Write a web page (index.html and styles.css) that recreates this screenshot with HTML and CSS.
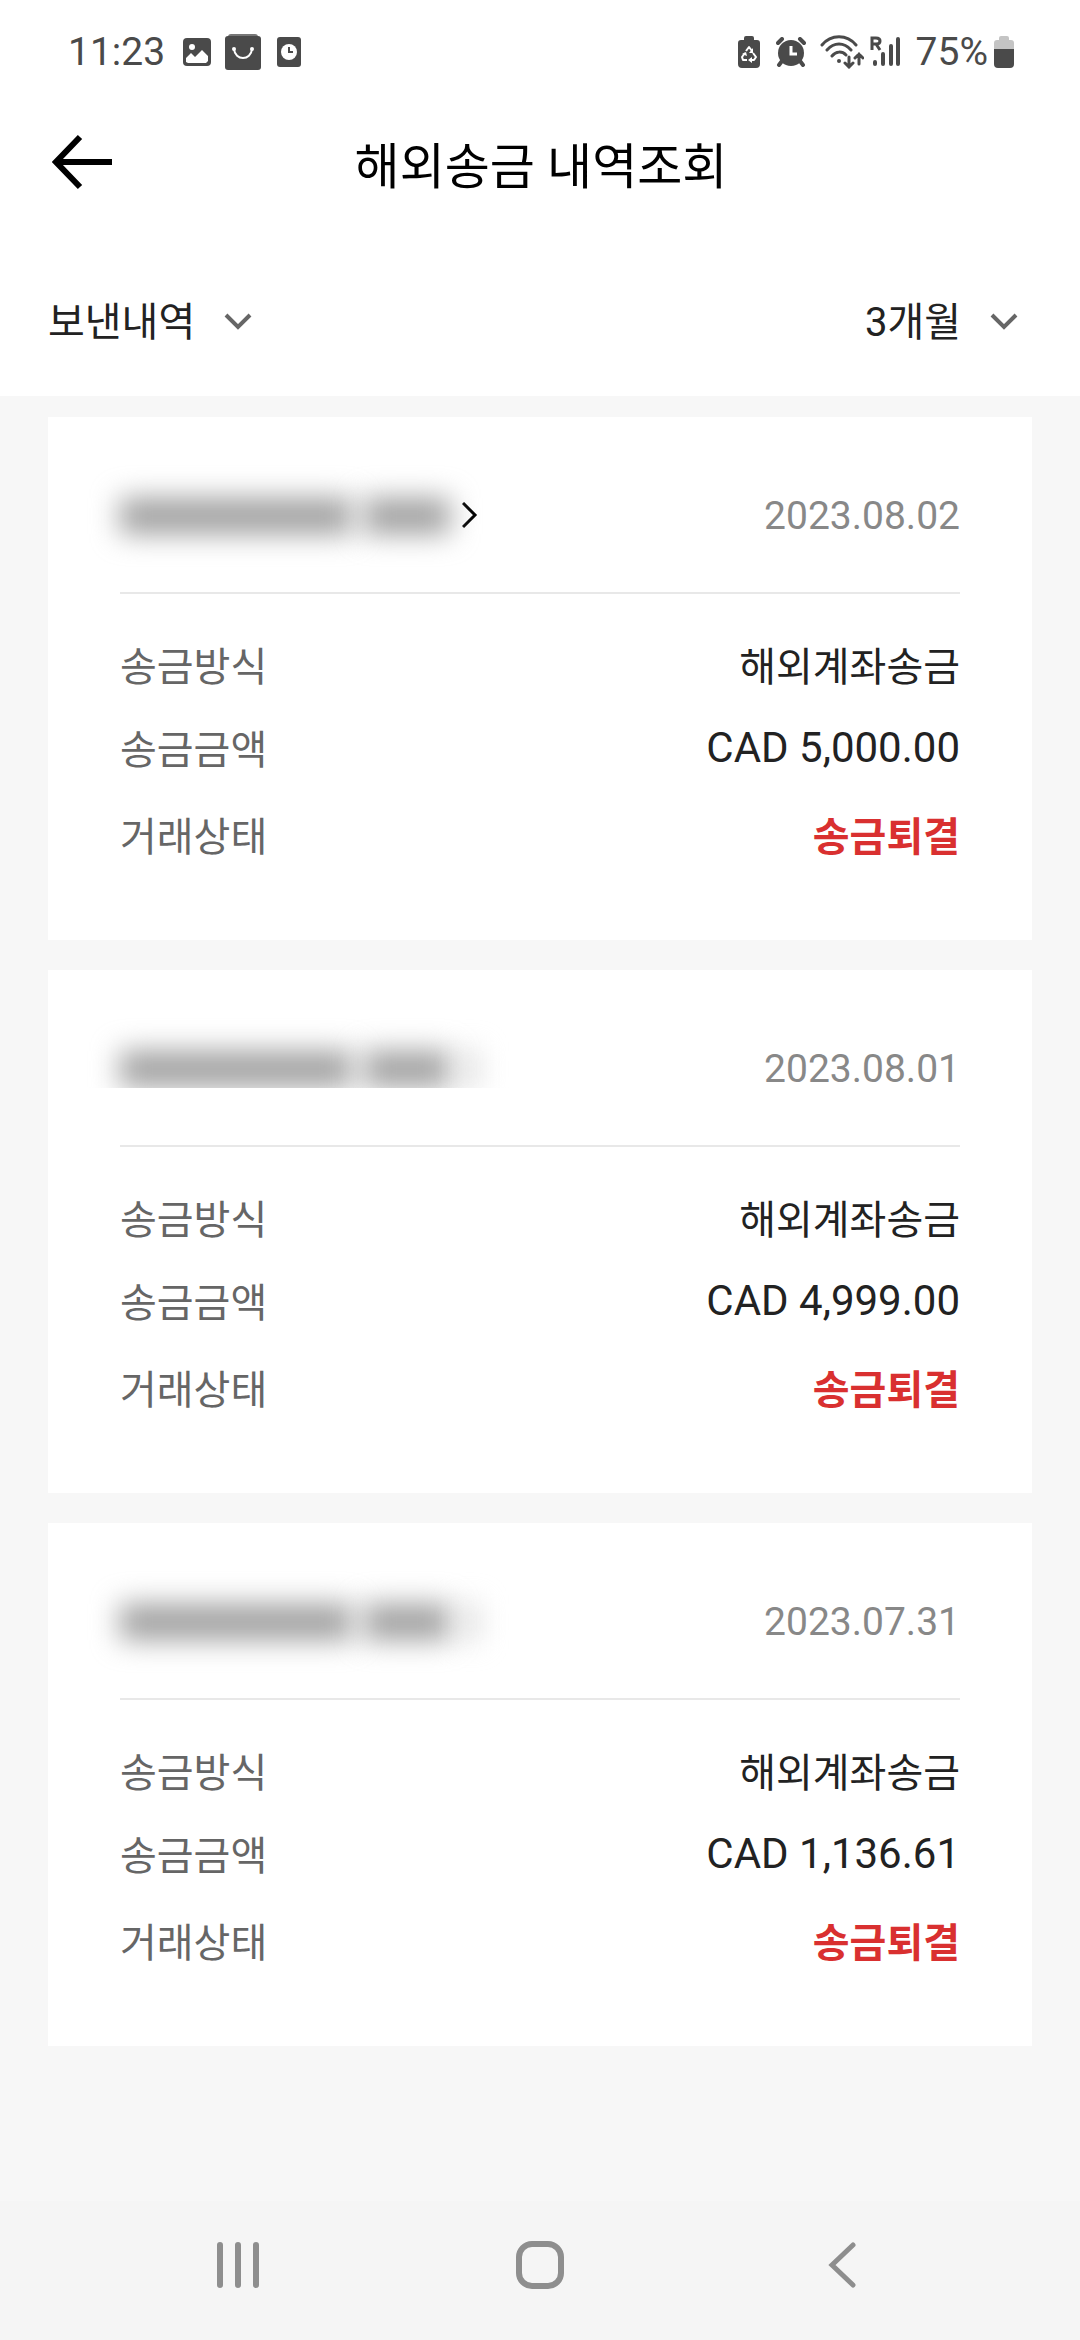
FILE: index.html
```html
<!DOCTYPE html>
<html lang="ko">
<head>
    <meta charset="UTF-8">
    <meta name="viewport" content="width=device-width, initial-scale=1.0">
    <title>해외송금 내역조회</title>
    <link rel="stylesheet" href="styles.css">
</head>
<body>
    <div class="status-bar">
        <div class="status-left">
            <span>11:23</span>
            <svg class="icon-image" width="28" height="28" viewBox="0 0 28 28">
                <rect width="28" height="28" rx="4" fill="#4a4a4a"/>
                <circle cx="9" cy="9" r="3" fill="#fff"/>
                <path d="M3 24v-4l5-5 4 4 7-7 6 6v5l-2 2H5z" fill="#fff"/>
            </svg>
            <svg width="36" height="36" viewBox="0 0 36 36">
                <path d="M3 3q0-3 3-3h24q3 0 3 3z" fill="#777"/>
                <rect y="2" width="36" height="34" rx="3" fill="#4a4a4a"/>
                <path d="M9 15c1 12 17 12 18 0" fill="none" stroke="#fff" stroke-width="2"/>
                <circle cx="9" cy="15" r="2" fill="#fff"/>
                <circle cx="27" cy="15" r="2" fill="#fff"/>
            </svg>
            <svg class="icon-clock" width="24" height="30" viewBox="0 0 24 30">
                <rect width="24" height="30" rx="3" fill="#4a4a4a"/>
                <circle cx="12" cy="15" r="8" fill="#fff"/>
                <path d="M12 10v5h4" fill="none" stroke="#4a4a4a" stroke-width="2"/>
            </svg>
        </div>
        <div class="status-right">
            <svg width="22" height="32" viewBox="0 0 22 32">
                <path d="M6 4V2q0-2 2-2h6q2 0 2 2v2h3q3 0 3 3v21q0 4-4 4H4q-4 0-4-4V7q0-3 3-3z" fill="#4a4a4a"/>
                <path d="M8 15l3-4 3 4M15 17l3 4-2 3h-3M9 24H5l-1-3 3-4" fill="none" stroke="#fff" stroke-width="2" stroke-linejoin="round"/>
                <path d="M15 12v5h-4zM14 21v6l-4-3zM4 18l4-2 1 4z" fill="#fff"/>
            </svg>
            <svg class="icon-alarm" width="30" height="30" viewBox="0 0 30 30">
                <circle cx="15" cy="16" r="13" fill="#4a4a4a"/>
                <path d="M2 6l4-4M28 6l-4-4M6 24l-3 4M24 24l3 4" stroke="#4a4a4a" stroke-width="4" stroke-linecap="round"/>
                <path d="M15 9v8h6" fill="none" stroke="#fff" stroke-width="3"/>
            </svg>
            <svg class="icon-wifi" width="44" height="34" viewBox="0 0 44 34">
                <g fill="none" stroke="#4a4a4a" stroke-width="3" stroke-linecap="round">
                    <path d="M2 10c9-11 25-11 34 0M7 15c7-8 17-8 24 0M12 21c4-5 10-5 14-1"/>
                    <path d="M29 22v10M25 28l4 4 4-4M39 29V19M35 23l4-4 4 4"/>
                </g>
                <circle cx="19" cy="26" r="2" fill="#4a4a4a"/>
            </svg>
            <svg class="icon-signal" width="30" height="32" viewBox="0 0 30 32">
                <path d="M2 14V2h4q4 0 4 3t-4 3H2M6 8l4 6" fill="none" stroke="#4a4a4a" stroke-width="3"/>
                <path d="M5 26v2M13 18v10M21 10v18M28 3v25" stroke="#4a4a4a" stroke-width="4" stroke-linecap="round"/>
            </svg>
            <span>75%</span>
            <svg class="icon-battery" width="20" height="32" viewBox="0 0 20 32">
                <path d="M5 4V2q0-2 2-2h6q2 0 2 2v2h2q3 0 3 3v6H0V7q0-3 3-3z" fill="#c4c4c4"/>
                <path d="M0 13h20v15q0 4-4 4H4q-4 0-4-4z" fill="#4a4a4a"/>
            </svg>
        </div>
    </div>

    <header>
        <button type="button" class="btn-back" aria-label="뒤로">
            <svg width="60" height="56" viewBox="0 0 60 56">
                <path d="M28 3L4 28l24 25M4 28h56" fill="none" stroke="#000" stroke-width="6"/>
            </svg>
        </button>
        <h1>해외송금 내역조회</h1>
    </header>

    <form class="filters">
        <div class="filter">
            <select aria-label="내역 구분">
                <option>보낸내역</option>
            </select>
            <svg width="28" height="18" viewBox="0 0 28 18">
                <path d="M2 2l12 12L26 2" fill="none" stroke="#666" stroke-width="4"/>
            </svg>
        </div>
        <div class="filter">
            <select aria-label="조회 기간">
                <option>3개월</option>
            </select>
            <svg width="28" height="18" viewBox="0 0 28 18">
                <path d="M2 2l12 12L26 2" fill="none" stroke="#666" stroke-width="4"/>
            </svg>
        </div>
    </form>

    <main>
        <section class="card">
            <div class="card-header">
                <a href="#" class="name" aria-label="상세보기">
                    <span class="mask mask-long"></span>
                    <span class="mask mask-short"></span>
                    <svg width="16" height="28" viewBox="0 0 16 28">
                        <path d="M1 1l12 12L1 25" fill="none" stroke="#000" stroke-width="3"/>
                    </svg>
                </a>
                <time datetime="2023-08-02">2023.08.02</time>
            </div>
            <dl>
                <div class="row">
                    <dt>송금방식</dt>
                    <dd>해외계좌송금</dd>
                </div>
                <div class="row">
                    <dt>송금금액</dt>
                    <dd class="amount">CAD 5,000.00</dd>
                </div>
                <div class="row row-status">
                    <dt>거래상태</dt>
                    <dd class="status">송금퇴결</dd>
                </div>
            </dl>
        </section>

        <section class="card">
            <div class="card-header">
                <a href="#" class="name name-cut" aria-label="상세보기">
                    <span class="mask mask-long"></span>
                    <span class="mask mask-short"></span>
                    <span class="mask mask-arrow"></span>
                </a>
                <time datetime="2023-08-01">2023.08.01</time>
            </div>
            <dl>
                <div class="row">
                    <dt>송금방식</dt>
                    <dd>해외계좌송금</dd>
                </div>
                <div class="row">
                    <dt>송금금액</dt>
                    <dd class="amount">CAD 4,999.00</dd>
                </div>
                <div class="row row-status">
                    <dt>거래상태</dt>
                    <dd class="status">송금퇴결</dd>
                </div>
            </dl>
        </section>

        <section class="card">
            <div class="card-header">
                <a href="#" class="name" aria-label="상세보기">
                    <span class="mask mask-long"></span>
                    <span class="mask mask-short"></span>
                    <span class="mask mask-arrow"></span>
                </a>
                <time datetime="2023-07-31">2023.07.31</time>
            </div>
            <dl>
                <div class="row">
                    <dt>송금방식</dt>
                    <dd>해외계좌송금</dd>
                </div>
                <div class="row">
                    <dt>송금금액</dt>
                    <dd class="amount">CAD 1,136.61</dd>
                </div>
                <div class="row row-status">
                    <dt>거래상태</dt>
                    <dd class="status">송금퇴결</dd>
                </div>
            </dl>
        </section>
    </main>

    <nav>
        <button type="button" aria-label="최근 앱">
            <svg width="48" height="48" viewBox="0 0 48 48">
                <path d="M6 4v40M24 4v40M42 4v40" stroke="#8e8e8e" stroke-width="6" stroke-linecap="round"/>
            </svg>
        </button>
        <button type="button" aria-label="홈">
            <svg width="48" height="48" viewBox="0 0 48 48">
                <rect x="3" y="3" width="42" height="42" rx="13" fill="none" stroke="#8e8e8e" stroke-width="6"/>
            </svg>
        </button>
        <button type="button" aria-label="뒤로">
            <svg width="48" height="48" viewBox="0 0 48 48">
                <path d="M35 4L14 24l21 20" fill="none" stroke="#8e8e8e" stroke-width="5" stroke-linecap="round"/>
            </svg>
        </button>
    </nav>
</body>
</html>
```

FILE: styles.css
```css
* {
    box-sizing: border-box;
}
body {
    font-family: Roboto, "Noto Sans CJK KR", sans-serif;
    margin: 0;
    min-height: 100vh;
    display: flex;
    flex-direction: column;
    background-color: #f7f7f7;
    color: #222;
    font-size: 40px;
}
svg {
    display: block;
    flex-shrink: 0;
}
button {
    padding: 0;
    border: none;
    background: none;
    cursor: pointer;
}
.status-bar {
    height: 104px;
    padding: 0 66px 0 68px;
    display: flex;
    justify-content: space-between;
    align-items: center;
    background-color: white;
    color: #4a4a4a;
    font-size: 39px;
}
.status-left, .status-right {
    display: flex;
    align-items: center;
}
.icon-image {
    margin: 0 14px 0 18px;
}
.icon-clock {
    margin-left: 16px;
}
.icon-alarm {
    margin: 0 14px 0 16px;
}
.icon-signal {
    margin: 0 16px 0 6px;
}
.icon-battery {
    margin-left: 6px;
}
header {
    height: 116px;
    padding: 0 50px 0 52px;
    display: grid;
    grid-template-columns: 1fr auto 1fr;
    align-items: center;
    background-color: white;
}
.btn-back {
    justify-self: start;
}
h1 {
    margin: 0;
    font-size: 49px;
    font-weight: 400;
    color: #000;
}
.filters {
    padding: 72px 62px 44px 48px;
    display: flex;
    justify-content: space-between;
    background-color: white;
}
.filter {
    display: flex;
    align-items: center;
    gap: 28px;
}
select {
    appearance: none;
    height: 60px;
    padding: 0;
    border: none;
    background: none;
    font: inherit;
    color: inherit;
}
main {
    flex: 1;
    padding: 21px 48px;
    display: flex;
    flex-direction: column;
    gap: 30px;
}
.card {
    padding: 72px 72px 74px;
    background-color: white;
}
.card-header {
    height: 105px;
    padding-bottom: 49px;
    display: flex;
    justify-content: space-between;
    align-items: center;
    border-bottom: 2px solid #e8e8e8;
}
.name {
    height: 54px;
    display: flex;
    align-items: center;
}
/* hidden recipient name */
.mask {
    height: 36px;
    background-color: #a0a0a0;
    filter: blur(14px);
}
.mask-long {
    width: 232px;
    margin-right: 12px;
}
.mask-short {
    width: 86px;
    margin-right: 12px;
}
.mask-arrow {
    width: 16px;
    background-color: #d8d8d8;
}
.name-cut {
    clip-path: inset(-40px -40px 8px -40px);
}
time {
    font-size: 39px;
    color: #888;
}
dl {
    margin: 42px 0 0;
    display: flex;
    flex-direction: column;
    gap: 27px;
}
.row {
    height: 56px;
    display: flex;
    justify-content: space-between;
    align-items: center;
}
.row-status {
    height: 64px;
}
dt {
    color: #666;
}
dd {
    margin: 0;
}
.amount {
    font-size: 42px;
}
.status {
    font-weight: 700;
    color: #d93030;
}
nav {
    height: 139px;
    padding: 0 8% 12px;
    display: grid;
    grid-template-columns: repeat(3, 1fr);
    background-color: #f5f5f5;
}
nav button {
    display: flex;
    justify-content: center;
    align-items: center;
}
```
